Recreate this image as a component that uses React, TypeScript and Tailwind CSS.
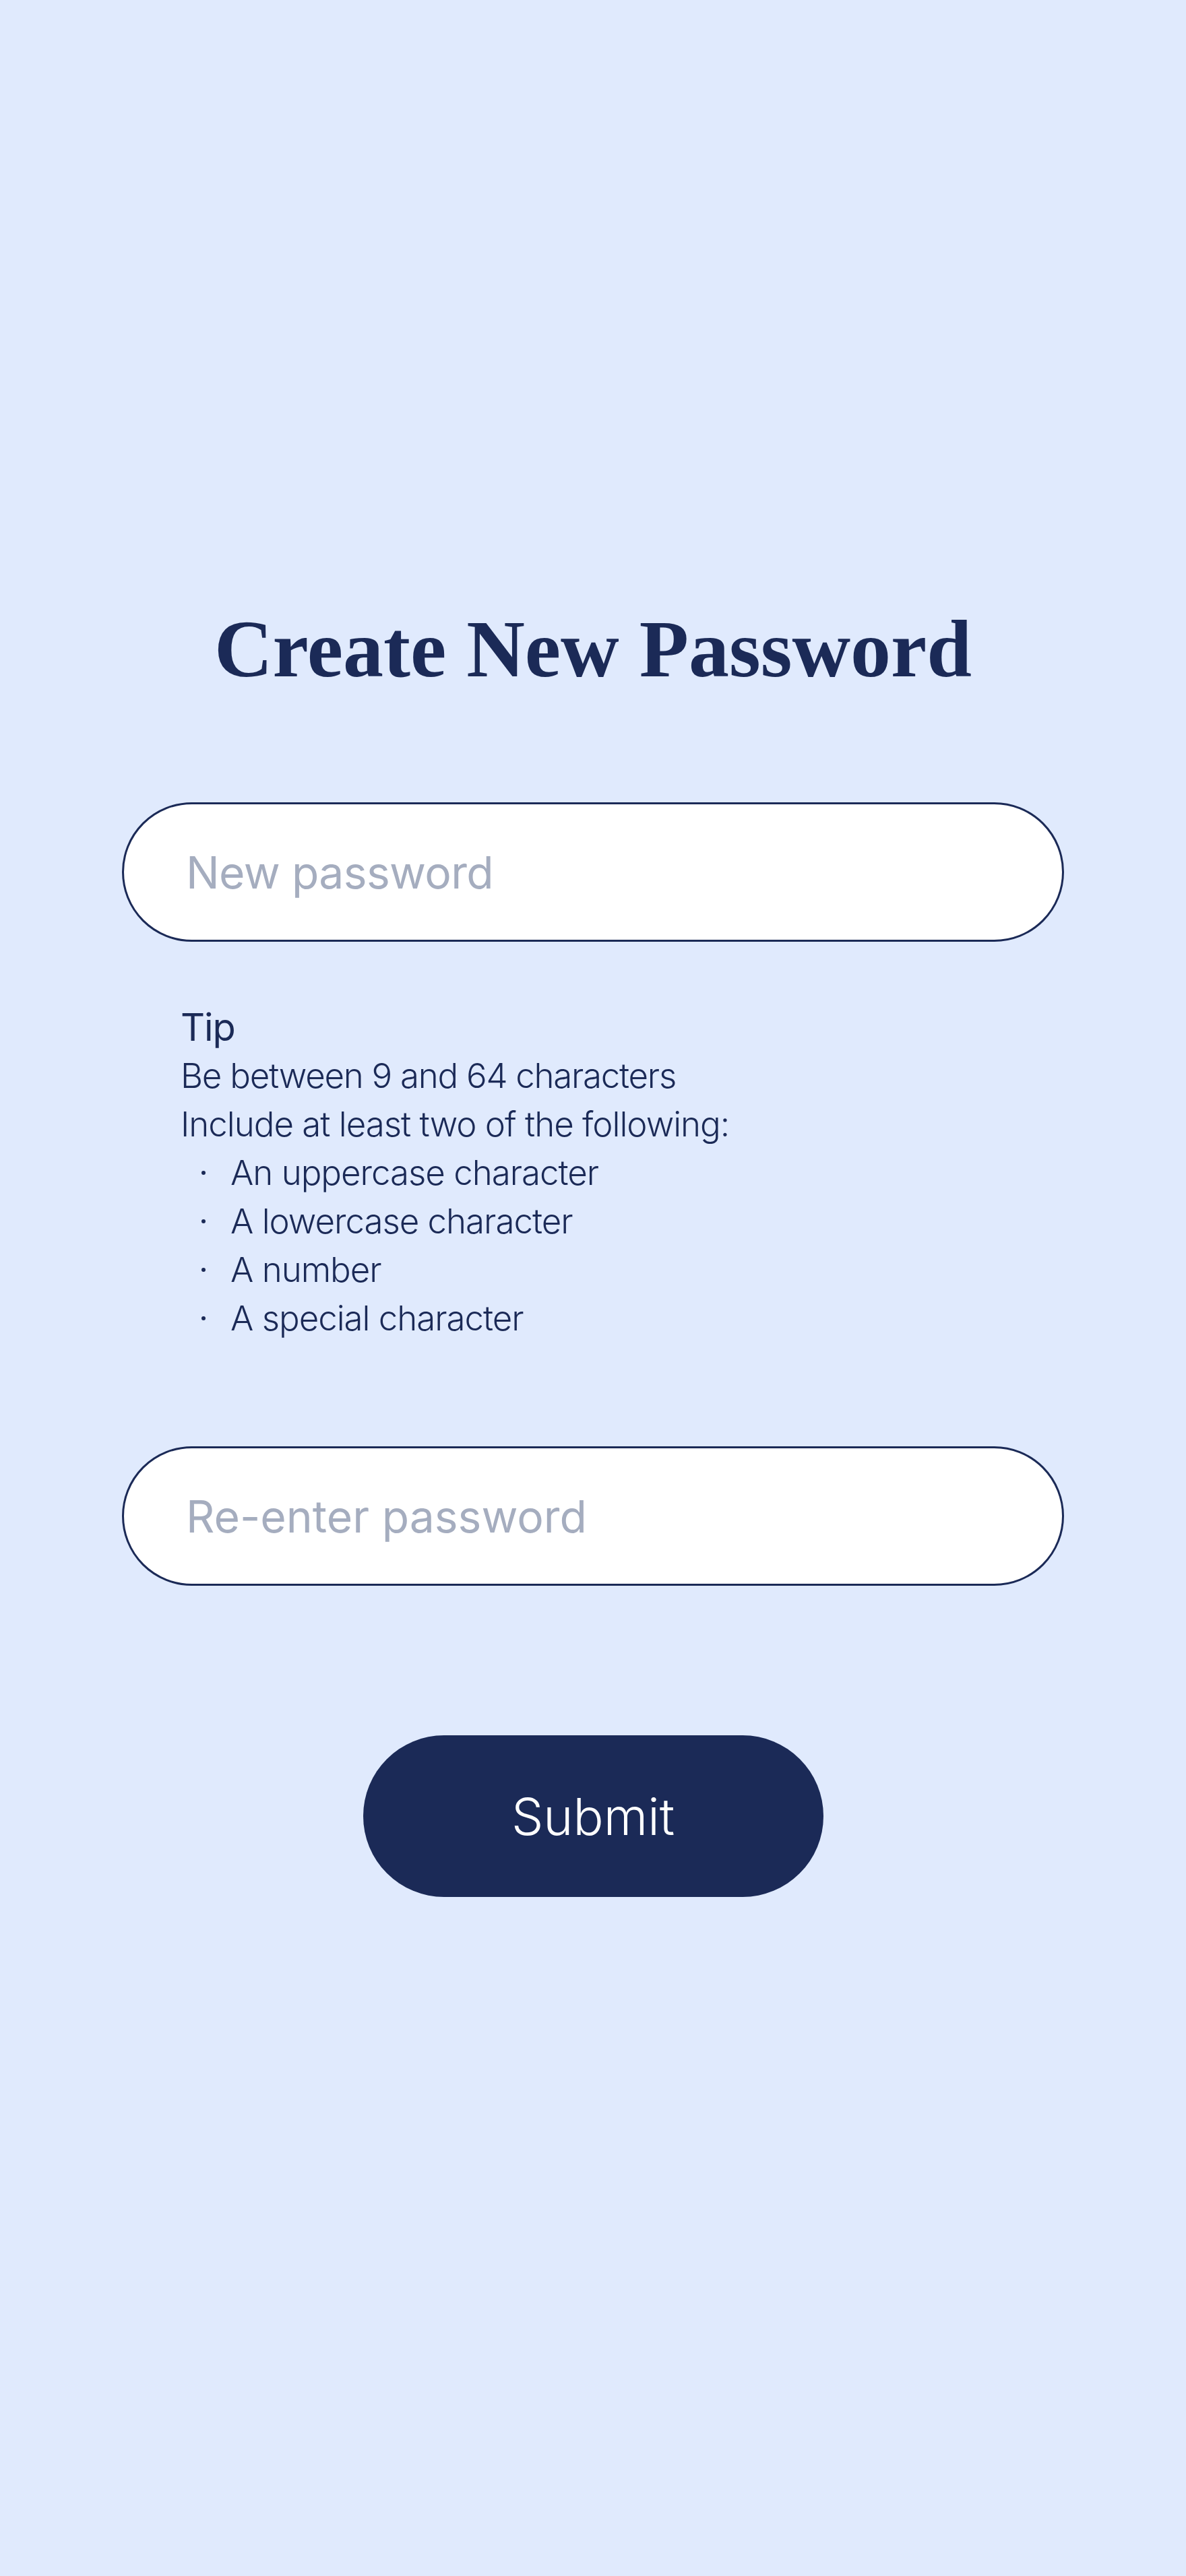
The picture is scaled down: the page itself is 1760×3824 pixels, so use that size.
import React from "react";

const items = [
  "An uppercase character",
  "A lowercase character",
  "A number",
  "A special character",
];

export default function App() {
  return (
    <div className="min-h-screen w-full bg-[#e0eafd] flex justify-center">
      <div className="w-[1398px] flex flex-col pt-[904px]">
        <h1 className="text-center text-[120px] leading-[120px] font-bold text-[#1b2a57] font-['Liberation_Serif','Times_New_Roman',serif]">
          Create New Password
        </h1>

        <input
          type="password"
          placeholder="New password"
          className="mt-[167px] h-[207px] w-full rounded-full border-[3.5px] border-[#1b2a57] bg-white pl-[92px] pr-[60px] text-[66px] tracking-[-0.01em] text-[#1b2a57] placeholder:text-[#a5adbf] outline-none font-['Inter','Noto_Sans',sans-serif] font-normal"
        />

        <div className="ml-[87px] mt-[91px] text-[#1b2a57] font-['Inter','Noto_Sans',sans-serif] font-light">
          <p className="text-[56px] leading-[72px] font-normal tracking-[-0.02em]">Tip</p>
          <p className="text-[51px] leading-[72px] tracking-[-0.025em]">Be between 9 and 64 characters</p>
          <p className="text-[51px] leading-[72px] tracking-[-0.02em]">Include at least two of the following:</p>
          <ul>
            {items.map((t) => (
              <li key={t} className="flex items-center text-[51px] leading-[72px] tracking-[-0.02em]">
                <span className="ml-[31px] mr-[37px] h-[6px] w-[6px] shrink-0 rounded-full bg-[#1b2a57]" />
                <span>{t}</span>
              </li>
            ))}
          </ul>
        </div>

        <input
          type="password"
          placeholder="Re-enter password"
          className="mt-[154px] h-[207px] w-full rounded-full border-[3.5px] border-[#1b2a57] bg-white pl-[92px] pr-[60px] text-[66px] tracking-[0em] text-[#1b2a57] placeholder:text-[#a5adbf] outline-none font-['Inter','Noto_Sans',sans-serif] font-normal"
        />

        <button
          type="button"
          className="mt-[222px] self-center h-[240px] w-[683px] rounded-full bg-[#1b2a57] text-white text-[75px] leading-none font-light font-['Inter','Noto_Sans',sans-serif]"
        >
          Submit
        </button>
      </div>
    </div>
  );
}
